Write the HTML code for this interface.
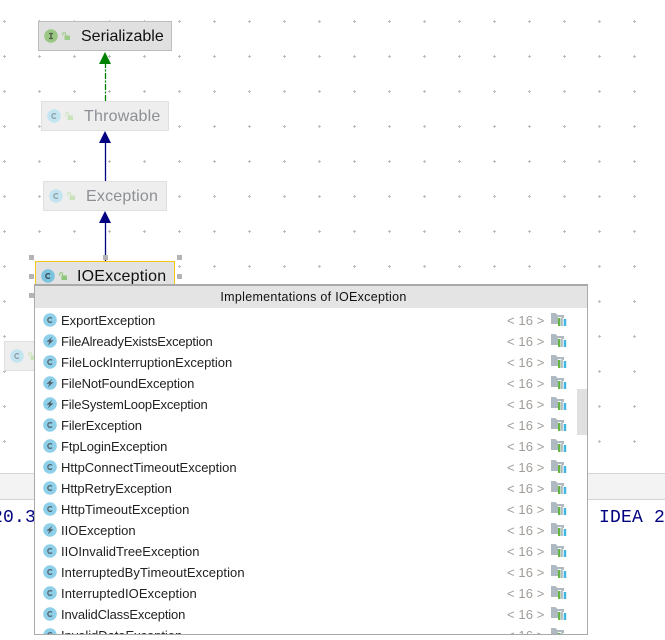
<!DOCTYPE html>
<html>
<head>
<meta charset="utf-8">
<style>
html,body{margin:0;padding:0;background:#fff}
body{position:relative;width:665px;height:640px;overflow:hidden;font-family:"Liberation Sans",sans-serif}
.a{position:absolute}
.node{position:absolute;box-sizing:border-box;font-size:16px;line-height:29px;white-space:nowrap;letter-spacing:.2px}
.h{position:absolute;width:5px;height:5px;background:#b4b4b4}
#pop{position:absolute;left:34px;top:284px;width:554px;height:351px;box-sizing:border-box;border:1px solid #a9a9a9;border-top:2px solid #a9a9a9;background:#fff;overflow:hidden}
#head{position:absolute;left:0;top:0;width:552px;height:22px;box-sizing:border-box;padding-left:5px;background:#e4e4e4;text-align:center;font-size:12.5px;line-height:23px;color:#111;letter-spacing:.3px}
.r{position:absolute;left:0;width:552px;height:21px}
.r svg.i{position:absolute;left:8px;top:3px}
.r svg.f{position:absolute;left:516px;top:3px}
.r b{position:absolute;left:26px;top:0;font-weight:normal;font-size:13px;line-height:21px;color:#222;white-space:nowrap}
.r u{position:absolute;left:472px;top:0;text-decoration:none;font-size:13px;line-height:21px;color:#a09c98;white-space:pre;letter-spacing:.1px}
#thumb{position:absolute;left:542px;top:103px;width:10px;height:46px;background:#e0e0e0}
.mono{position:absolute;font-family:"Liberation Mono",monospace;font-size:18px;line-height:22px;color:#000080;letter-spacing:.2px;white-space:nowrap}
</style>
</head>
<body>
<svg class="a" style="left:0;top:0" width="665" height="473">
<defs>
<pattern id="d" x="3" y="20" width="35" height="35" patternUnits="userSpaceOnUse">
<rect x="1" y="0" width="1" height="3" fill="#bdbdbd"/><rect x="0" y="1" width="3" height="1" fill="#bdbdbd"/>
</pattern>
<symbol id="c" viewBox="0 0 14 14"><circle cx="7" cy="7" r="6.8" fill="#8ed0ea"/><path d="M9 5.400A2.400 2.400 0 1 0 9 8.600" fill="none" stroke="#55656f" stroke-width="1.300"/></symbol>
<symbol id="e" viewBox="0 0 14 14"><circle cx="7" cy="7" r="6.8" fill="#8ed0ea"/><path d="M9.400 2.800L3.400 7.800H6.400L4.800 11.400L10.600 6.200H7.400Z" fill="#4f5f69"/></symbol>
<symbol id="fo" viewBox="0 0 16 13"><path d="M0 0H4.500L6.500 2H13V5H11V4H7V11H0Z" fill="#afb9c1"/><rect x="7" y="5" width="2.300" height="8" fill="#62b543"/><rect x="9.800" y="4.500" width="2" height="8.500" fill="#afb9c1"/><rect x="12.700" y="6" width="2.500" height="7" fill="#40b6e0"/></symbol>
<symbol id="lk" viewBox="0 0 8 8"><rect x="2.500" y="3.500" width="5.500" height="4.500" fill="currentColor"/><path d="M.8 4V1.800C.8 .2 3.600 .2 3.600 1.800V3.500" fill="none" stroke="currentColor" stroke-width="1"/></symbol>
</defs>
<rect width="665" height="473" fill="url(#d)"/>
</svg>

<!-- edges -->
<svg class="a" style="left:0;top:0" width="665" height="300">
<path d="M105.500 101V60" stroke="#008000" stroke-width="1.300" stroke-dasharray="6 1.500 2 1.500" fill="none"/>
<path d="M105 52L111 64H99Z" fill="#008000"/>
<path d="M105.500 181V140" stroke="#000080" stroke-width="1.300" fill="none"/>
<path d="M105 131L111 143H99Z" fill="#000080"/>
<path d="M105.500 261V220" stroke="#000080" stroke-width="1.300" fill="none"/>
<path d="M105 211L111 223H99Z" fill="#000080"/>
</svg>

<!-- Serializable -->
<div class="node" style="left:38px;top:21px;width:134px;height:30px;background:#e0e0e0;border:1px solid #bcbcbc;color:#111;letter-spacing:0">
<svg class="a" style="left:5px;top:7px" width="14" height="14" viewBox="0 0 14 14"><circle cx="7" cy="7" r="6.8" fill="#9bc785"/><path d="M5 4.500H9M5 9.500H9M7 4.500V9.500" stroke="#4e5b45" stroke-width="1.300" fill="none"/></svg>
<svg class="a" style="left:23px;top:10px;color:#9ccb88" width="8" height="8"><use href="#lk"/></svg>
<span class="a" style="left:42px;top:0">Serializable</span>
</div>

<!-- Throwable -->
<div class="node" style="left:41px;top:101px;width:128px;height:30px;background:#eeeeee;border:1px solid #e0e0e0;color:#8c8f94">
<svg class="a" style="left:5px;top:7px" width="14" height="14"><circle cx="7" cy="7" r="6.800" fill="#c3e5f1"/><path d="M9 5.400A2.400 2.400 0 1 0 9 8.600" fill="none" stroke="#8d9aa3" stroke-width="1.200"/></svg>
<svg class="a" style="left:23px;top:10px;color:#c9e4bb" width="8" height="8"><use href="#lk"/></svg>
<span class="a" style="left:42px;top:0">Throwable</span>
</div>

<!-- Exception -->
<div class="node" style="left:43px;top:181px;width:124px;height:30px;background:#eeeeee;border:1px solid #e0e0e0;color:#8c8f94">
<svg class="a" style="left:5px;top:7px" width="14" height="14"><circle cx="7" cy="7" r="6.800" fill="#c3e5f1"/><path d="M9 5.400A2.400 2.400 0 1 0 9 8.600" fill="none" stroke="#8d9aa3" stroke-width="1.200"/></svg>
<svg class="a" style="left:23px;top:10px;color:#c9e4bb" width="8" height="8"><use href="#lk"/></svg>
<span class="a" style="left:42px;top:0">Exception</span>
</div>

<!-- Left stub -->
<div class="node" style="left:4px;top:341px;width:40px;height:30px;background:#eeeeee;border:1px solid #e0e0e0">
<svg class="a" style="left:5px;top:7px" width="14" height="14"><circle cx="7" cy="7" r="6.800" fill="#c3e5f1"/><path d="M9 5.400A2.400 2.400 0 1 0 9 8.600" fill="none" stroke="#8d9aa3" stroke-width="1.200"/></svg>
<svg class="a" style="left:23px;top:10px;color:#c9e4bb" width="8" height="8"><use href="#lk"/></svg>
</div>

<!-- IOException -->
<div class="node" style="left:35px;top:261px;width:140px;height:30px;background:#e2e2e2;border:1px solid #f5c518;color:#111">
<svg class="a" style="left:5px;top:7px" width="14" height="14"><circle cx="7" cy="7" r="6.800" fill="#7cc3df"/><path d="M9 5.400A2.400 2.400 0 1 0 9 8.600" fill="none" stroke="#3e4c56" stroke-width="1.300"/></svg>
<svg class="a" style="left:23px;top:10px;color:#8fc77a" width="8" height="8"><use href="#lk"/></svg>
<span class="a" style="left:41px;top:0">IOException</span>
</div>
<div class="h" style="left:29px;top:255px"></div>
<div class="h" style="left:103px;top:255px"></div>
<div class="h" style="left:177px;top:255px"></div>
<div class="h" style="left:29px;top:274px"></div>
<div class="h" style="left:177px;top:274px"></div>
<div class="h" style="left:29px;top:293px"></div>

<!-- console band -->
<div class="a" style="left:0;top:473px;width:665px;height:27px;box-sizing:border-box;background:#f3f3f3;border-top:1px solid #d4d4d4;border-bottom:1px solid #d4d4d4"></div>
<div class="mono" style="right:629px;top:507px">20.3</div>
<div class="mono" style="left:599px;top:507px">IDEA 2</div>

<!-- popup -->
<div id="pop">
<div id="head">Implementations of IOException</div>
<div class="r" style="top:24px"><svg class="i" width="14" height="14"><use href="#c"/></svg><b style="letter-spacing:-.03px">ExportException</b><u>&lt; 16 &gt;</u><svg class="f" width="16" height="13"><use href="#fo"/></svg></div>
<div class="r" style="top:45px"><svg class="i" width="14" height="14"><use href="#e"/></svg><b style="letter-spacing:-.2px">FileAlreadyExistsException</b><u>&lt; 16 &gt;</u><svg class="f" width="16" height="13"><use href="#fo"/></svg></div>
<div class="r" style="top:66px"><svg class="i" width="14" height="14"><use href="#c"/></svg><b style="letter-spacing:0">FileLockInterruptionException</b><u>&lt; 16 &gt;</u><svg class="f" width="16" height="13"><use href="#fo"/></svg></div>
<div class="r" style="top:87px"><svg class="i" width="14" height="14"><use href="#e"/></svg><b style="letter-spacing:-.09px">FileNotFoundException</b><u>&lt; 16 &gt;</u><svg class="f" width="16" height="13"><use href="#fo"/></svg></div>
<div class="r" style="top:108px"><svg class="i" width="14" height="14"><use href="#e"/></svg><b style="letter-spacing:-.16px">FileSystemLoopException</b><u>&lt; 16 &gt;</u><svg class="f" width="16" height="13"><use href="#fo"/></svg></div>
<div class="r" style="top:129px"><svg class="i" width="14" height="14"><use href="#c"/></svg><b style="letter-spacing:-.11px">FilerException</b><u>&lt; 16 &gt;</u><svg class="f" width="16" height="13"><use href="#fo"/></svg></div>
<div class="r" style="top:150px"><svg class="i" width="14" height="14"><use href="#c"/></svg><b style="letter-spacing:-.08px">FtpLoginException</b><u>&lt; 16 &gt;</u><svg class="f" width="16" height="13"><use href="#fo"/></svg></div>
<div class="r" style="top:171px"><svg class="i" width="14" height="14"><use href="#c"/></svg><b style="letter-spacing:-.01px">HttpConnectTimeoutException</b><u>&lt; 16 &gt;</u><svg class="f" width="16" height="13"><use href="#fo"/></svg></div>
<div class="r" style="top:192px"><svg class="i" width="14" height="14"><use href="#c"/></svg><b style="letter-spacing:-.07px">HttpRetryException</b><u>&lt; 16 &gt;</u><svg class="f" width="16" height="13"><use href="#fo"/></svg></div>
<div class="r" style="top:213px"><svg class="i" width="14" height="14"><use href="#c"/></svg><b style="letter-spacing:.05px">HttpTimeoutException</b><u>&lt; 16 &gt;</u><svg class="f" width="16" height="13"><use href="#fo"/></svg></div>
<div class="r" style="top:234px"><svg class="i" width="14" height="14"><use href="#e"/></svg><b style="letter-spacing:.02px">IIOException</b><u>&lt; 16 &gt;</u><svg class="f" width="16" height="13"><use href="#fo"/></svg></div>
<div class="r" style="top:255px"><svg class="i" width="14" height="14"><use href="#c"/></svg><b style="letter-spacing:.01px">IIOInvalidTreeException</b><u>&lt; 16 &gt;</u><svg class="f" width="16" height="13"><use href="#fo"/></svg></div>
<div class="r" style="top:276px"><svg class="i" width="14" height="14"><use href="#c"/></svg><b style="letter-spacing:.07px">InterruptedByTimeoutException</b><u>&lt; 16 &gt;</u><svg class="f" width="16" height="13"><use href="#fo"/></svg></div>
<div class="r" style="top:297px"><svg class="i" width="14" height="14"><use href="#c"/></svg><b style="letter-spacing:.1px">InterruptedIOException</b><u>&lt; 16 &gt;</u><svg class="f" width="16" height="13"><use href="#fo"/></svg></div>
<div class="r" style="top:318px"><svg class="i" width="14" height="14"><use href="#c"/></svg><b style="letter-spacing:-.14px">InvalidClassException</b><u>&lt; 16 &gt;</u><svg class="f" width="16" height="13"><use href="#fo"/></svg></div>
<div class="r" style="top:339px"><svg class="i" width="14" height="14"><use href="#c"/></svg><b style="letter-spacing:-.05px">InvalidDataException</b><u>&lt; 16 &gt;</u><svg class="f" width="16" height="13"><use href="#fo"/></svg></div>
<div id="thumb"></div>
</div>
</body>
</html>
